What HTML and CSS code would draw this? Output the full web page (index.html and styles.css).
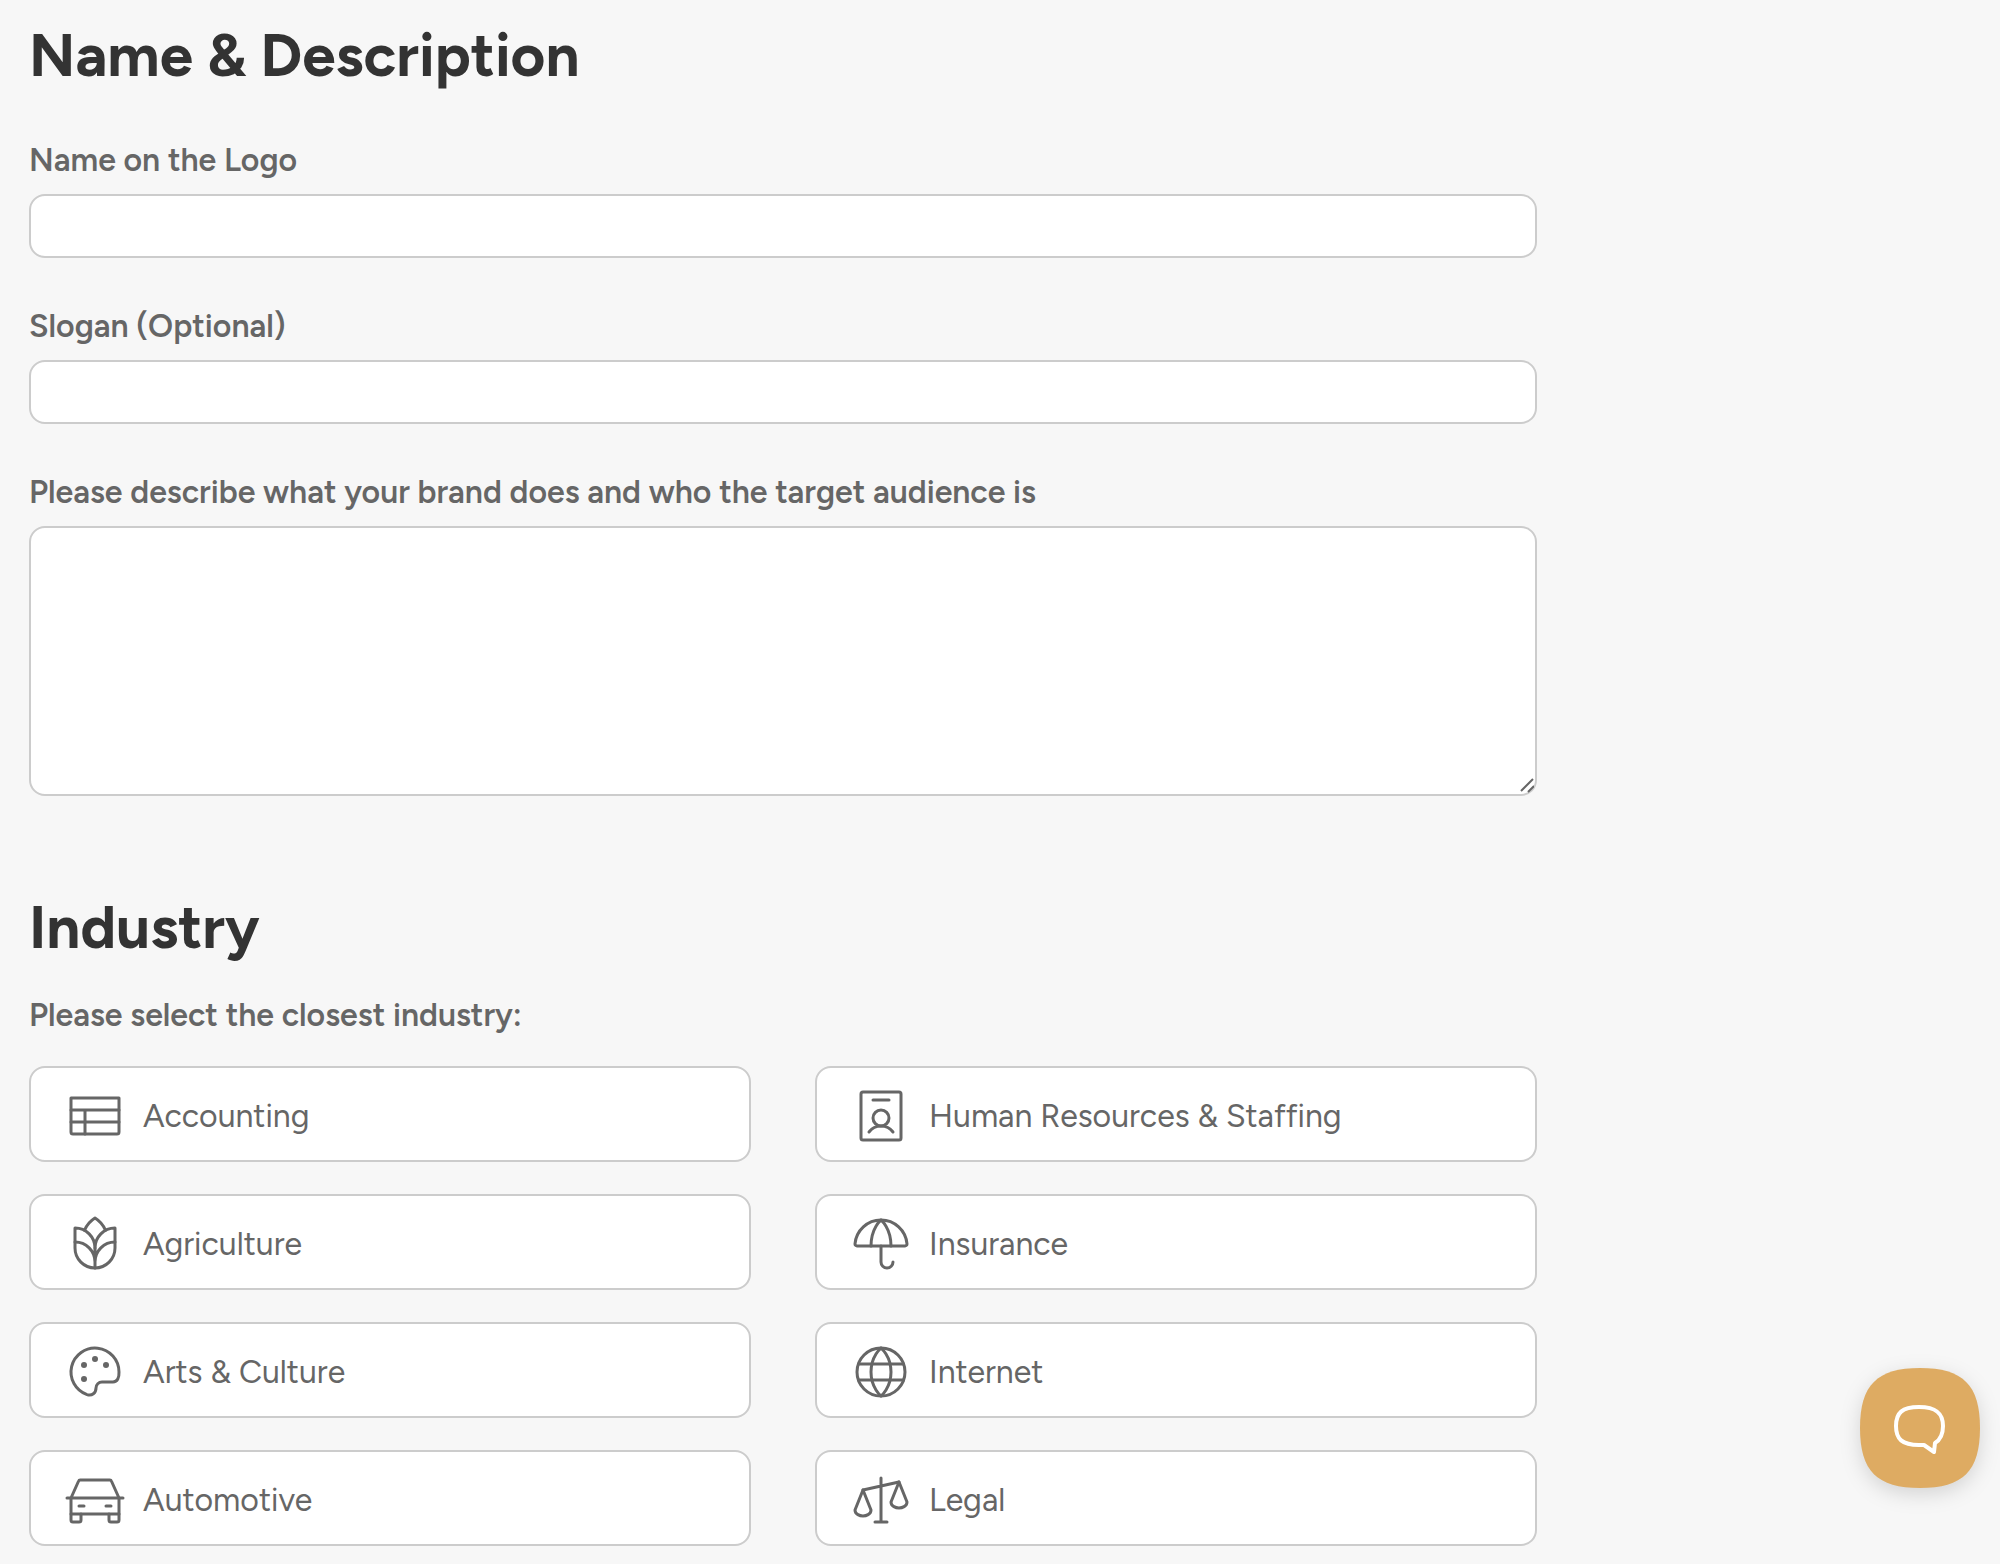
FILE: index.html
```html
<!DOCTYPE html>
<html lang="en">
<head>
  <meta charset="UTF-8">
  <meta name="viewport" content="width=device-width, initial-scale=1.0">
  <title>Logo Brief</title>
  <link rel="stylesheet" href="styles.css">
</head>
<body>
  <form class="brief">
    <section class="section">
      <h2>Name &amp; Description</h2>
      <div class="fields">
        <div class="field">
          <label for="logo-name">Name on the Logo</label>
          <input type="text" id="logo-name" name="name">
        </div>
        <div class="field">
          <label for="slogan">Slogan (Optional)</label>
          <input type="text" id="slogan" name="slogan">
        </div>
        <div class="field">
          <label for="description">Please describe what your brand does and who the target audience is</label>
          <div class="textarea-wrap">
            <textarea id="description" name="description"></textarea>
            <svg class="grip" viewBox="0 0 16 16" aria-hidden="true"><path d="M3 14 15 2M10 15l6-6"/></svg>
          </div>
        </div>
      </div>
    </section>

    <section class="section industry">
      <h2>Industry</h2>
      <p class="hint" id="industry-hint">Please select the closest industry:</p>
      <div class="options" role="radiogroup" aria-labelledby="industry-hint">
        <label class="option">
          <input type="radio" name="industry" value="accounting">
          <svg class="icon" viewBox="0 0 256 256" aria-hidden="true">
            <path d="M32,56H224V192a8,8,0,0,1-8,8H40a8,8,0,0,1-8-8Z"/>
            <path d="M32,104H224M32,152H224M88,104V200"/>
          </svg>
          <span>Accounting</span>
        </label>
        <label class="option">
          <input type="radio" name="industry" value="hr">
          <svg class="icon" viewBox="0 0 256 256" aria-hidden="true">
            <rect x="48" y="32" width="160" height="192" rx="8"/>
            <path d="M96,64h64M80,192a60,60,0,0,1,96,0"/>
            <circle cx="128" cy="136" r="32"/>
          </svg>
          <span>Human Resources &amp; Staffing</span>
        </label>
        <label class="option">
          <input type="radio" name="industry" value="agriculture">
          <svg class="icon" viewBox="0 0 256 256" aria-hidden="true">
            <path d="M208,64V144a80,80,0,0,1-160,0V64a80,80,0,0,1,80,80,80,80,0,0,1,80-80Z"/>
            <path d="M48,120a80,80,0,0,1,80,80,80,80,0,0,1,80-80M128,144v80"/>
            <path d="M86,73c14-32,42-49,42-49s28,17,42,49"/>
          </svg>
          <span>Agriculture</span>
        </label>
        <label class="option">
          <input type="radio" name="industry" value="insurance">
          <svg class="icon" viewBox="0 0 256 256" aria-hidden="true">
            <path d="M32,136H224a8,8,0,0,0,8-8.7,104.4,104.4,0,0,0-208,0A8,8,0,0,0,32,136Z"/>
            <path d="M88,136c0-72,40-104,40-104s40,32,40,104"/>
            <path d="M128,136v64a24,24,0,0,0,48,0"/>
          </svg>
          <span>Insurance</span>
        </label>
        <label class="option">
          <input type="radio" name="industry" value="arts">
          <svg class="icon" viewBox="0 0 256 256" aria-hidden="true">
            <path d="M96,218.5A96,96,0,1,1,224,128C225,150,218,168,200,168H156a24,24,0,0,0-24,24C132,212,116,225,96,218.5Z"/>
            <g class="dots">
              <circle cx="128" cy="76" r="12"/>
              <circle cx="84" cy="100" r="12"/>
              <circle cx="84" cy="156" r="12"/>
              <circle cx="172" cy="100" r="12"/>
            </g>
          </svg>
          <span>Arts &amp; Culture</span>
        </label>
        <label class="option">
          <input type="radio" name="industry" value="internet">
          <svg class="icon" viewBox="0 0 256 256" aria-hidden="true">
            <circle cx="128" cy="128" r="96"/>
            <path d="M168,128c0,64-40,96-40,96s-40-32-40-96,40-96,40-96,40,32,40,96Z"/>
            <path d="M38,96H218M38,160H218"/>
          </svg>
          <span>Internet</span>
        </label>
        <label class="option">
          <input type="radio" name="industry" value="automotive">
          <svg class="icon" viewBox="0 0 256 256" aria-hidden="true">
            <path d="M16,120H240M32,120,62,53a8,8,0,0,1,7-5H187a8,8,0,0,1,7,5l30,67"/>
            <path d="M32,120v88a8,8,0,0,0,8,8H64a8,8,0,0,0,8-8V184M224,120v88a8,8,0,0,1-8,8H192a8,8,0,0,1-8-8V184"/>
            <path d="M32,184H224M64,152H84M172,152h20"/>
          </svg>
          <span>Automotive</span>
        </label>
        <label class="option">
          <input type="radio" name="industry" value="legal">
          <svg class="icon" viewBox="0 0 256 256" aria-hidden="true">
            <path d="M128,40V216M104,216h48M56,88,200,56"/>
            <path d="M24,168c0,17.7,20,24,32,24s32-6.3,32-24L56,88Z"/>
            <path d="M168,136c0,17.7,20,24,32,24s32-6.3,32-24L200,56Z"/>
          </svg>
          <span>Legal</span>
        </label>
      </div>
    </section>
  </form>

  <button type="button" class="chat-btn" aria-label="Open chat">
    <svg viewBox="0 0 120 120" aria-hidden="true">
      <path class="chat-bg" d="M0,60C0,17,17,0,60,0s60,17,60,60-17,60-60,60S0,103,0,60Z"/>
      <path class="chat-bubble" d="M59,39C42,39,36,45,36,58s6,19,23,19h5l10,7,1-9c5-3,8-9,8-17C83,45,76,39,59,39Z"/>
    </svg>
  </button>
</body>
</html>
```
FILE: styles.css
```css
* {
  box-sizing: border-box;
}
body {
  margin: 0;
  background: #f7f7f7;
  color: #666;
  font-family: Figtree, Lato, sans-serif;
  font-size: 32px;
  line-height: 40px;
}
.brief {
  max-width: 1566px;
  padding: 19px 29px 18px;
}
h2 {
  margin: 0;
  color: #333;
  font-size: 60px;
  line-height: 72px;
  font-weight: 700;
}
.fields {
  display: flex;
  flex-direction: column;
  gap: 48px;
  margin-top: 49px;
}
.field {
  display: flex;
  flex-direction: column;
  gap: 14px;
}
.field label,
.hint {
  font-weight: 600;
}
.field input,
.field textarea {
  display: block;
  width: 100%;
  height: 64px;
  padding: 8px 24px;
  border: 2px solid #ccc;
  border-radius: 16px;
  background: #fff;
  color: #333;
  font: inherit;
}
.textarea-wrap {
  position: relative;
}
.field textarea {
  height: 270px;
  resize: vertical;
}
.field textarea::-webkit-resizer {
  display: none;
}
.grip {
  position: absolute;
  right: 3px;
  bottom: 3px;
  width: 16px;
  height: 16px;
  fill: none;
  stroke: #666;
  stroke-width: 2;
  pointer-events: none;
}
.industry {
  margin-top: 95px;
}
.hint {
  margin: 32px 0 31px;
}
.options {
  display: grid;
  grid-template-columns: 1fr 1fr;
  gap: 32px 64px;
}
.option {
  position: relative;
  display: flex;
  align-items: center;
  gap: 16px;
  padding: 16px 32px 12px;
  border: 2px solid #ccc;
  border-radius: 16px;
  background: #fff;
  cursor: pointer;
}
.option input {
  position: absolute;
  opacity: 0;
}
.option:has(input:checked) {
  border-color: #deab62;
}
.icon {
  flex: none;
  width: 64px;
  height: 64px;
  fill: none;
  stroke: #666;
  stroke-width: 12;
  stroke-linecap: round;
  stroke-linejoin: round;
}
.dots {
  fill: #666;
  stroke: none;
}
.chat-btn {
  position: fixed;
  right: 20px;
  bottom: 76px;
  width: 120px;
  height: 120px;
  padding: 0;
  border: none;
  background: none;
  cursor: pointer;
  filter: drop-shadow(0 6px 10px rgba(0, 0, 0, 0.14));
}
.chat-btn svg {
  display: block;
}
.chat-bg {
  fill: #deab62;
}
.chat-bubble {
  fill: none;
  stroke: #fff;
  stroke-width: 4;
  stroke-linejoin: round;
}
```
